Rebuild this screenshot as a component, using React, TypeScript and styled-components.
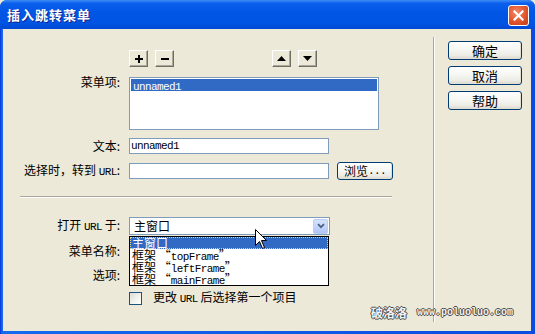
import React from 'react';
import styled, { createGlobalStyle } from 'styled-components';

const Global = createGlobalStyle`
  html, body { margin: 0; padding: 0; width: 535px; height: 334px; overflow: hidden; background: #ECE9D8; }
  body { font-family: "Noto Sans CJK SC", "Noto Sans", sans-serif; font-size: 12px; color: #000; }
  * { box-sizing: border-box; }
`;

const Window = styled.div`
  position: relative;
  width: 535px;
  height: 334px;
  display: flex;
  flex-direction: column;
  background: linear-gradient(to right, #0831D9 0px, #166AEE 2px, #0A4BE0 100%);
  border-radius: 7px 7px 0 0;
  overflow: hidden;
`;

const TitleBar = styled.div`
  height: 29px;
  flex: none;
  display: flex;
  align-items: center;
  justify-content: space-between;
  padding: 0 6px 0 7px;
  background: linear-gradient(to bottom, #3D8DF5 0%, #0A5EEB 12%, #0055E5 45%, #0054E3 80%, #0249D4 100%);
`;

const Title = styled.div`
  color: #fff;
  font-weight: bold;
  font-size: 13px;
  letter-spacing: 1px;
  line-height: 16px;
  text-shadow: 1px 1px 0 #0F1F8C;
  margin-top: 1px;
`;

const CloseButton = styled.div`
  width: 21px;
  height: 21px;
  border: 1px solid #fff;
  border-radius: 3px;
  background: radial-gradient(circle at 40% 35%, #F08A68 0%, #E2542C 55%, #C23C1A 100%);
  display: flex;
  align-items: center;
  justify-content: center;
  margin-top: 1px;
`;

const Body = styled.div`
  flex: 1;
  display: flex;
  margin: 0 4px 3px 3px;
  background: #ECE9D8;
`;

const LeftPanel = styled.div`
  position: relative;
  width: 430px;
  flex: none;
  display: flex;
  flex-direction: column;
`;

const VSep = styled.div`
  width: 2px;
  flex: none;
  border-left: 1px solid #ACA899;
  border-right: 1px solid #fff;
  margin: 8px 0 9px 0;
`;

const RightPanel = styled.div`
  display: flex;
  flex-direction: column;
  gap: 6px;
  padding: 12px 0 0 13px;
`;

const FormRow = styled.div<{ $mt: number; $h: number }>`
  display: grid;
  grid-template-columns: 117px auto;
  column-gap: 9px;
  align-items: center;
  margin-top: ${p => p.$mt}px;
  height: ${p => p.$h}px;
`;

const Label = styled.div<{ $top?: boolean }>`
  text-align: right;
  white-space: nowrap;
  line-height: 12px;
  align-self: ${p => (p.$top ? 'start' : 'center')};
  margin-top: ${p => (p.$top ? '-1px' : '0')};
`;

const Lat = styled.span`
  font-family: "Liberation Mono", "DejaVu Sans Mono", monospace;
  font-size: 11px;
  letter-spacing: -0.6px;
`;

const Controls = styled.div`
  display: flex;
  align-items: center;
`;

const ToolGroup = styled.div<{ $ml?: number }>`
  display: flex;
  gap: 7px;
  margin-left: ${p => p.$ml ?? 0}px;
`;

const ToolButton = styled.div`
  width: 19px;
  height: 17px;
  background: #ECE9D8;
  border: 1px solid;
  border-color: #fff #716F64 #716F64 #fff;
  box-shadow: inset -1px -1px 0 #ACA899;
  display: flex;
  align-items: center;
  justify-content: center;
`;

const ListBox = styled.div`
  width: 250px;
  height: 53px;
  border: 1px solid #7F9DB9;
  background: #fff;
  padding: 1px;
`;

const ListItem = styled.div<{ $sel?: boolean }>`
  height: 12px;
  line-height: 12px;
  padding-left: 2px;
  background: ${p => (p.$sel ? '#316AC5' : 'transparent')};
  color: ${p => (p.$sel ? '#fff' : '#000')};
  white-space: nowrap;
`;

const TextField = styled.input`
  width: 200px;
  height: 16px;
  border: 1px solid #7F9DB9;
  background: #fff;
  padding: 0 1px;
  margin: 0;
  font-family: "Liberation Mono", "DejaVu Sans Mono", monospace;
  font-size: 11px;
  letter-spacing: -0.6px;
  color: #000;
  outline: none;
`;

const XpButton = styled.div<{ $w: number; $h: number; $fs?: number }>`
  width: ${p => p.$w}px;
  height: ${p => p.$h}px;
  border: 1px solid #003C74;
  border-radius: 3px;
  background: linear-gradient(to bottom, #FFFFFF 0%, #F6F6F3 45%, #ECEBE4 80%, #D9D6CB 100%);
  box-shadow: inset -1px -1px 0 #E2DED3;
  display: flex;
  align-items: center;
  justify-content: center;
  font-size: ${p => p.$fs ?? 12}px;
  line-height: 14px;
  white-space: nowrap;
`;

const HSep = styled.div`
  margin: 16px 0 0 17px;
  width: 372px;
  height: 2px;
  border-top: 1px solid #ACA899;
  border-bottom: 1px solid #fff;
`;

const Select = styled.div`
  width: 201px;
  height: 18px;
  border: 1px solid #7F9DB9;
  background: #fff;
  display: flex;
  align-items: center;
  justify-content: space-between;
  padding: 0 1px 0 4px;
  line-height: 12px;
`;

const ArrowButton = styled.div`
  width: 15px;
  height: 15px;
  border-radius: 2px;
  background: linear-gradient(to bottom, #D6E2FD 0%, #C1D3FB 60%, #AFC5F6 100%);
  border: 1px solid #B9CDF7;
  display: flex;
  align-items: center;
  justify-content: center;
`;

const CheckRow = styled.div`
  display: flex;
  align-items: center;
  gap: 11px;
  margin: 8px 0 0 126px;
  line-height: 12px;
`;

const CheckBox = styled.div`
  width: 13px;
  height: 13px;
  border: 1px solid #1C5180;
  background: linear-gradient(135deg, #DCDCD7 0%, #F3F3EF 60%, #FFFFFF 100%);
`;

const DropList = styled.div`
  position: absolute;
  top: 207px;
  left: 126px;
  width: 200px;
  height: 50px;
  border: 1px solid #000;
  background: #fff;
  padding: 0;
`;

const DropItem = styled.div<{ $sel?: boolean }>`
  height: 12px;
  line-height: 12px;
  padding-left: 2px;
  white-space: nowrap;
  background: ${p => (p.$sel ? '#316AC5' : 'transparent')};
  color: ${p => (p.$sel ? '#fff' : '#000')};
  outline: ${p => (p.$sel ? '1px dotted #E8D48A' : 'none')};
  outline-offset: -1px;
`;

const Watermark = styled.div`
  position: absolute;
  left: 371px;
  top: 306px;
  display: flex;
  align-items: center;
  gap: 10px;
  color: #F2F2F2;
  font-weight: bold;
  text-shadow: 1px 0 0 #4A4A4A, -1px 0 0 #4A4A4A, 0 1px 0 #4A4A4A, 0 -1px 0 #4A4A4A;
  line-height: 14px;
`;

const WmLat = styled.span`
  font-family: "Liberation Mono", "DejaVu Sans Mono", monospace;
  font-size: 10px;
  font-weight: bold;
`;

const Cursor = styled.svg`
  position: absolute;
  left: 255px;
  top: 229px;
`;

const Plus = () => (
  <svg width="8" height="8" viewBox="0 0 8 8">
    <rect x="3" y="0" width="2" height="8" fill="#000" />
    <rect x="0" y="3" width="8" height="2" fill="#000" />
  </svg>
);

const Minus = () => (
  <svg width="8" height="8" viewBox="0 0 8 8">
    <rect x="0" y="3" width="8" height="2" fill="#000" />
  </svg>
);

const Tri = ({ up }: { up?: boolean }) => (
  <svg width="9" height="5" viewBox="0 0 9 5">
    {up ? <polygon points="4.5,0 9,5 0,5" fill="#000" /> : <polygon points="0,0 9,0 4.5,5" fill="#000" />}
  </svg>
);

export default function App() {
  return (
    <>
      <Global />
      <Window>
        <TitleBar>
          <Title>插入跳转菜单</Title>
          <CloseButton>
            <svg width="11" height="11" viewBox="0 0 11 11">
              <path d="M1.5 1.5 L9.5 9.5 M9.5 1.5 L1.5 9.5" stroke="#fff" strokeWidth="2.2" strokeLinecap="square" />
            </svg>
          </CloseButton>
        </TitleBar>
        <Body>
          <LeftPanel>
            <FormRow $mt={21} $h={17}>
              <div />
              <Controls>
                <ToolGroup>
                  <ToolButton><Plus /></ToolButton>
                  <ToolButton><Minus /></ToolButton>
                </ToolGroup>
                <ToolGroup $ml={98}>
                  <ToolButton><Tri up /></ToolButton>
                  <ToolButton><Tri /></ToolButton>
                </ToolGroup>
              </Controls>
            </FormRow>
            <FormRow $mt={10} $h={53}>
              <Label $top>菜单项:</Label>
              <ListBox>
                <ListItem $sel><Lat>unnamed1</Lat></ListItem>
              </ListBox>
            </FormRow>
            <FormRow $mt={8} $h={16}>
              <Label>文本:</Label>
              <TextField readOnly value="unnamed1" />
            </FormRow>
            <FormRow $mt={8} $h={18}>
              <Label>选择时，转到 <Lat>URL</Lat>:</Label>
              <Controls>
                <TextField readOnly value="" />
                <XpButton $w={56} $h={18} style={{ marginLeft: 8 }}>浏览<Lat>...</Lat></XpButton>
              </Controls>
            </FormRow>
            <HSep />
            <FormRow $mt={19} $h={18}>
              <Label>打开 <Lat>URL</Lat> 于:</Label>
              <Select>
                <span>主窗口</span>
                <ArrowButton>
                  <svg width="8" height="6" viewBox="0 0 8 6">
                    <path d="M1 1.2 L4 4.2 L7 1.2" stroke="#4D6185" strokeWidth="1.8" fill="none" />
                  </svg>
                </ArrowButton>
              </Select>
            </FormRow>
            <FormRow $mt={8} $h={16}>
              <Label>菜单名称:</Label>
              <div />
            </FormRow>
            <FormRow $mt={8} $h={16}>
              <Label>选项:</Label>
              <div />
            </FormRow>
            <CheckRow>
              <CheckBox />
              <span>更改 <Lat>URL</Lat> 后选择第一个项目</span>
            </CheckRow>
            <DropList>
              <DropItem $sel>主窗口</DropItem>
              <DropItem>框架 “<Lat>topFrame</Lat>”</DropItem>
              <DropItem>框架 “<Lat>leftFrame</Lat>”</DropItem>
              <DropItem>框架 “<Lat>mainFrame</Lat>”</DropItem>
            </DropList>
          </LeftPanel>
          <VSep />
          <RightPanel>
            <XpButton $w={74} $h={19} $fs={13}>确定</XpButton>
            <XpButton $w={74} $h={19} $fs={13}>取消</XpButton>
            <XpButton $w={74} $h={19} $fs={13}>帮助</XpButton>
          </RightPanel>
        </Body>
        <Watermark>
          <span>破洛洛</span>
          <WmLat>www.poluoluo.com</WmLat>
        </Watermark>
        <Cursor width="13" height="21" viewBox="0 0 13 21">
          <path d="M0.5 0.5 L0.5 16.5 L4.5 12.5 L7.5 19.5 L9.5 18.5 L6.5 11.5 L11.5 11.5 Z" fill="#fff" stroke="#000" strokeWidth="1" />
        </Cursor>
      </Window>
    </>
  );
}
